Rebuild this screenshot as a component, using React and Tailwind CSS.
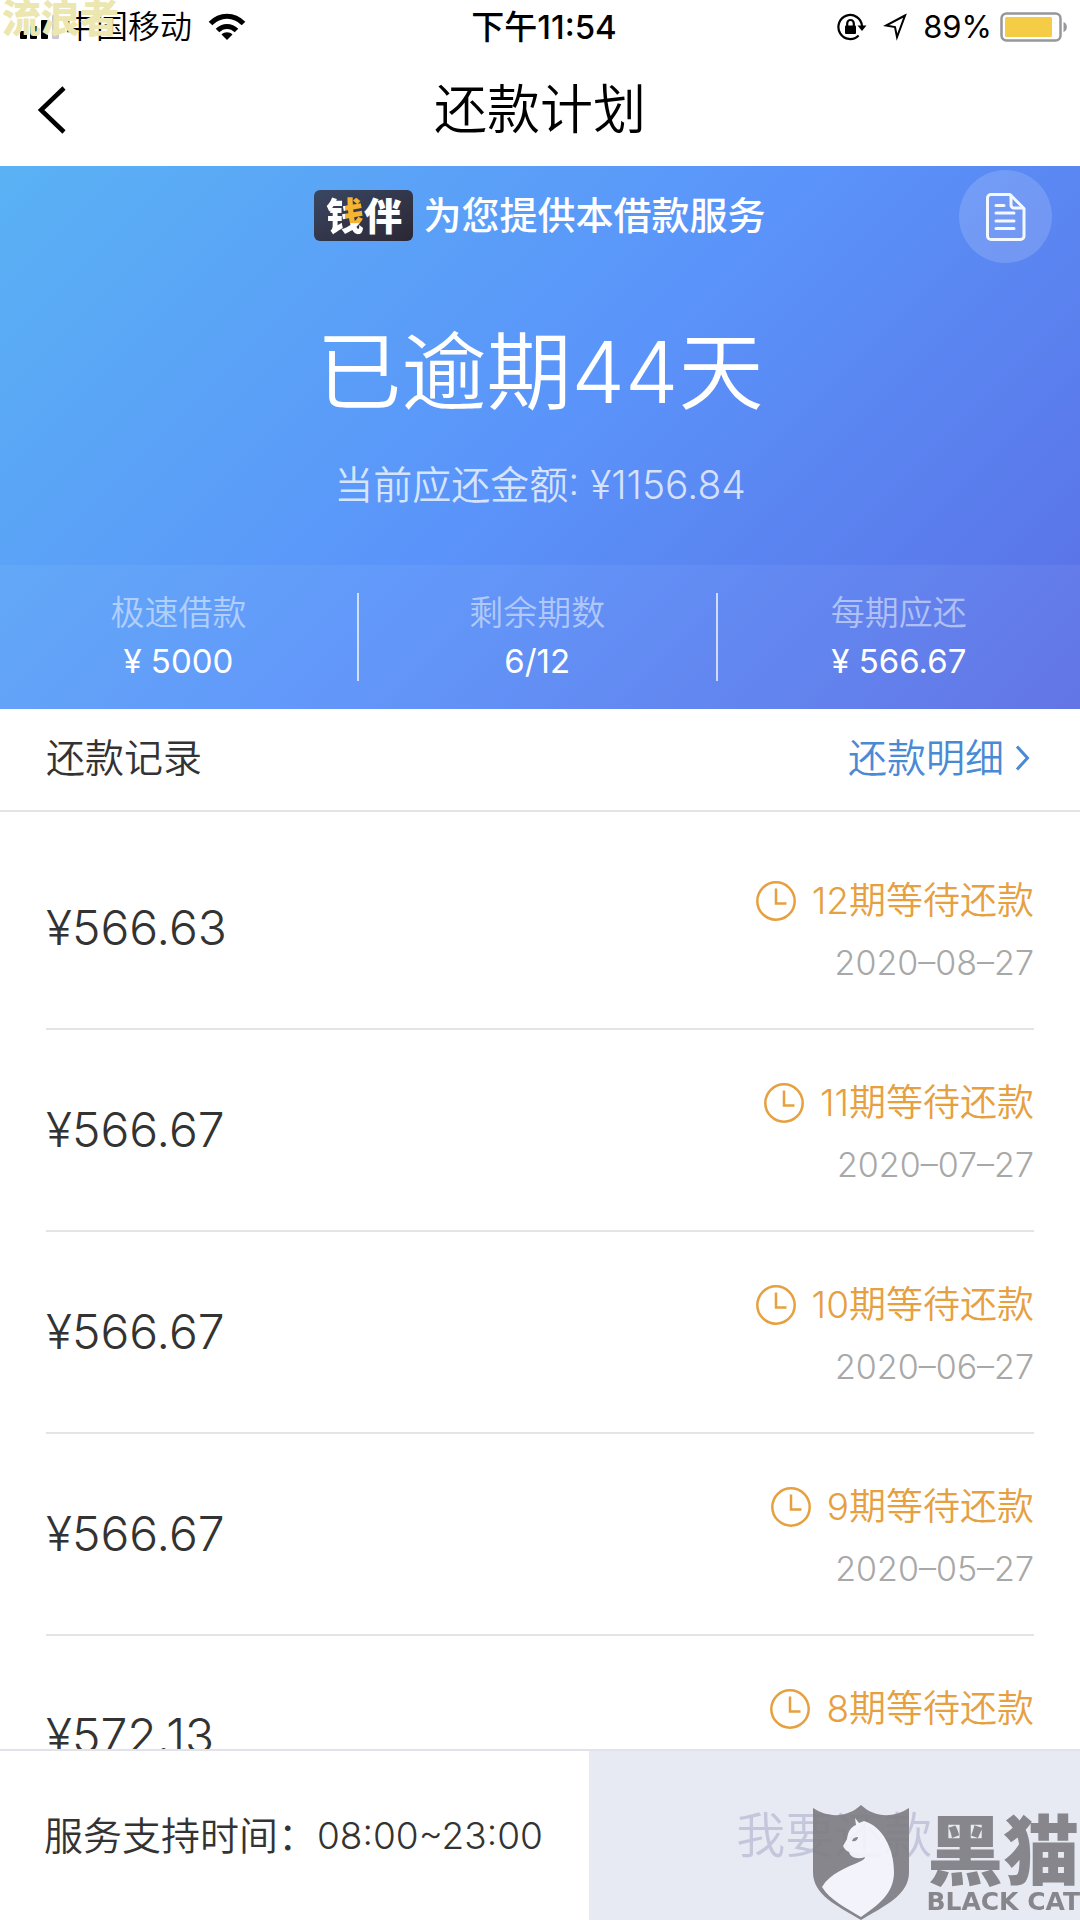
const PLAN = [
  { term: 12, amount: '566.63', date: '2020–08–27' },
  { term: 11, amount: '566.67', date: '2020–07–27' },
  { term: 10, amount: '566.67', date: '2020–06–27' },
  { term: 9, amount: '566.67', date: '2020–05–27' },
  { term: 8, amount: '572.13', date: '2020–04–27' },
];

const STATS = [
  { label: '极速借款', value: '¥ 5000' },
  { label: '剩余期数', value: '6/12' },
  { label: '每期应还', value: '¥ 566.67' },
];

function SignalIcon() {
  return (
    <svg width="40" height="26" viewBox="0 0 40 26" fill="#000">
      <rect x="0" y="17" width="7" height="8" rx="1" />
      <rect x="10" y="12" width="7" height="13" rx="1" />
      <rect x="21" y="6" width="7" height="19" rx="1" />
      <rect x="32" y="1" width="7" height="24" rx="1" fill="#c9c9d2" />
    </svg>
  );
}

function WifiIcon() {
  return (
    <svg width="38" height="28" viewBox="0 0 38 28" fill="none" stroke="#000" strokeWidth="5">
      <path d="M2.500 10.500C12 .8 26 .8 35.500 10.500" />
      <path d="M9.500 17.500C15 12 23 12 28.500 17.500" />
      <path d="M19 27l-5.500-5.500c3-3 8-3 11 0z" fill="#000" stroke="none" />
    </svg>
  );
}

function RotationLockIcon() {
  return (
    <svg width="30" height="28" viewBox="0 0 30 28" fill="none" stroke="#000" strokeWidth="2.2">
      <path d="M25 13a11.800 12 0 1 0-3.400 9.500" />
      <path d="M20.500 12.500h9L25 18z" fill="#000" stroke="none" />
      <rect x="8" y="12.500" width="11" height="8.500" rx="1" fill="#000" stroke="none" />
      <path d="M10.200 13V10.500a3.300 3.500 0 0 1 6.600 0V13" />
    </svg>
  );
}

function LocationIcon() {
  return (
    <svg width="24" height="28" viewBox="0 0 24 28" fill="none" stroke="#000" strokeWidth="2">
      <path d="M22 2.500L3 12.500l9 1.500L14 24z" />
    </svg>
  );
}

function BatteryIcon() {
  return (
    <svg width="68" height="30" viewBox="0 0 68 30">
      <rect x="1.500" y="1.500" width="59" height="27" rx="5" fill="#fff" stroke="#96979b" strokeWidth="2.500" />
      <rect x="5" y="5" width="47" height="20" rx="1.500" fill="#f5cc46" />
      <path d="M63.500 10c4.500 1.500 4.500 8.500 0 10z" fill="#96979b" />
    </svg>
  );
}

function DocIcon() {
  return (
    <svg width="40" height="48" viewBox="0 0 40 48" fill="none" stroke="#f4f8ff" strokeWidth="3" strokeLinejoin="round">
      <path d="M5 1.500h19L38 15.500V43a3.500 3.500 0 0 1-3.500 3.500H5A3.500 3.500 0 0 1 1.500 43V5A3.500 3.500 0 0 1 5 1.500z" />
      <path d="M25 2V12a3 3 0 0 0 3 3h9.500" />
      <path d="M10 12.500h8M10 20h18M10 28h18M10 35.500h18" strokeLinecap="round" />
    </svg>
  );
}

function ClockIcon() {
  return (
    <svg width="40" height="40" viewBox="0 0 40 40" fill="none" stroke="currentColor" strokeWidth="2.500">
      <circle cx="20" cy="20" r="18.700" />
      <path d="M20 7.500V22.500h10.500" />
    </svg>
  );
}

function StatusBar() {
  return (
    <div className="relative grid h-[54px] shrink-0 grid-cols-[1fr_auto_1fr] items-center pr-3 pl-5 text-[32px] leading-8">
      <div className="flex items-center">
        <SignalIcon />
        <span className="mr-4 ml-1">中国移动</span>
        <WifiIcon />
      </div>
      <span className="text-[33px] font-medium">下午11:54</span>
      <div className="flex items-center justify-end">
        <RotationLockIcon />
        <span className="mx-4"><LocationIcon /></span>
        <span className="mr-2 text-[31px] font-normal">89%</span>
        <BatteryIcon />
      </div>
      <span className="absolute top-0 left-0.5 text-[39px] leading-9 font-black text-[#ece6b0]">流浪者</span>
    </div>
  );
}

function PlanRow({ term, amount, date }) {
  return (
    <li className="flex h-[202px] shrink-0 items-center justify-between border-b-2 border-[#e4e4e4]">
      <span className="text-[48px] leading-[48px] text-[#333]">¥{amount}</span>
      <div className="flex flex-col items-end gap-4 pt-2">
        <div className="flex items-center gap-4 text-[37px] leading-[46px] text-[#e6a03f]">
          <ClockIcon />
          <span>{term}期等待还款</span>
        </div>
        <time className="text-[34px] leading-[46px] font-light text-[#a8a8a8]">{date}</time>
      </div>
    </li>
  );
}

function BlackCatMark() {
  return (
    <div className="pointer-events-none absolute right-0 bottom-0 flex items-end gap-4 text-[#7c7c81] opacity-90">
      <svg width="98" height="115" viewBox="0 0 98 115">
        <path d="M1 3c17 11 35 9 48-3 13 12 31 14 48 3v64c0 23-23 33-48 48C24 100 1 90 1 67z" fill="#7c7c81" />
        <path d="M43 13l4 5 5-2c18 5 30 27 30 51 0 22-16 33-33 45C34 103 18 95 10 82c8-14 26-20 37-25 4-2 6-3 6-5-8 3-15 0-16-5-3-1-5-4-6-6l4-7c1-8 4-12 9-14z" fill="#f5f6fc" />
        <path d="M40 36c1-3 3-4 6-4 0 3-3 5-6 4z" fill="#7c7c81" />
      </svg>
      <div className="flex flex-col items-center pb-1">
        <span className="text-[76px] leading-[74px] font-black">黑猫</span>
        <span className="font-['DejaVu_Sans'] text-[25px] leading-7 font-bold">BLACK CAT</span>
      </div>
    </div>
  );
}

export default function App() {
  return (
    <div className="flex h-screen flex-col overflow-hidden bg-white font-['Inter','Noto_Sans_CJK_SC',sans-serif] font-[350] text-black">
      <StatusBar />

      {/* Title bar */}
      <header className="grid h-28 shrink-0 grid-cols-[1fr_auto_1fr] items-center px-9">
        <button type="button" aria-label="返回">
          <svg width="30" height="48" viewBox="0 0 30 48" fill="none" stroke="#000" strokeWidth="4.500">
            <path d="M28 2L5 24l23 22" />
          </svg>
        </button>
        <h1 className="text-[53px] leading-[60px]">还款计划</h1>
      </header>

      {/* Overdue summary */}
      <section className="relative shrink-0 bg-[linear-gradient(135deg,#5ab2f4_0%,#5a94fa_50%,#5b6ee4_100%)] text-white">
        <div className="flex h-[399px] flex-col items-center pt-6">
          <div className="flex items-center gap-2.5">
            <span className="flex h-[51px] w-[99px] items-center justify-center rounded-md bg-linear-to-br from-[#3a4763] to-[#2b2734] text-[38px] leading-[48px] font-black">
              <span className="bg-white bg-[linear-gradient(#f5b431,#f5b431)] bg-[length:50%_65%] bg-right-top bg-no-repeat bg-clip-text text-transparent">钱</span>
              伴
            </span>
            <span className="text-[38px] leading-[51px] font-medium">为您提供本借款服务</span>
          </div>
          <p className="mt-[74px] text-[85px] leading-[116px]">已逾期44天</p>
          <p className="mt-[30px] text-[39px] leading-[48px] text-white/75">当前应还金额: ¥1156.84</p>
        </div>
        <dl className="grid h-36 grid-cols-[1fr_1fr_1.01fr] items-center bg-white/5">
          {STATS.map((s) => (
            <div key={s.label} className="flex h-[88px] flex-col items-center justify-center gap-1 border-r-2 border-white/70 last:border-r-0">
              <dt className="text-[34px] leading-[44px] text-white/50">{s.label}</dt>
              <dd className="text-[33px] leading-[44px] font-normal">{s.value}</dd>
            </div>
          ))}
        </dl>
        <button type="button" aria-label="借款合同" className="absolute top-1 right-7 flex size-[93px] items-center justify-center rounded-full bg-white/15">
          <DocIcon />
        </button>
      </section>

      {/* Records */}
      <div className="flex h-[103px] shrink-0 items-center justify-between border-b-2 border-[#e4e4e4] pr-12 pb-1 pl-[46px] text-[39px] leading-[48px]">
        <h2 className="text-[#333]">还款记录</h2>
        <a href="#detail" className="flex items-center gap-2.5 text-[#4a8ad4]">
          还款明细
          <svg width="18" height="26" viewBox="0 0 18 26" fill="none" stroke="currentColor" strokeWidth="3">
            <path d="M3 1.500L13.500 13 3 24.500" />
          </svg>
        </a>
      </div>
      <ul className="flex min-h-0 flex-1 flex-col overflow-y-auto px-[46px] pt-4 [scrollbar-width:none]">
        {PLAN.map((p) => (
          <PlanRow key={p.term} {...p} />
        ))}
      </ul>

      <footer className="relative flex h-[171px] shrink-0 border-t-2 border-[#e2e2e8]">
        <p className="flex w-[54.5%] items-center pl-11 text-[39px] leading-[48px] text-[#333]">
          服务支持时间：<span className="text-[37px]">08:00~23:00</span>
        </p>
        <button type="button" disabled className="flex-1 bg-[#e7e9f3] text-[49px] leading-[60px] text-[#c4c7db]">我要还款</button>
        <BlackCatMark />
      </footer>
    </div>
  );
}
